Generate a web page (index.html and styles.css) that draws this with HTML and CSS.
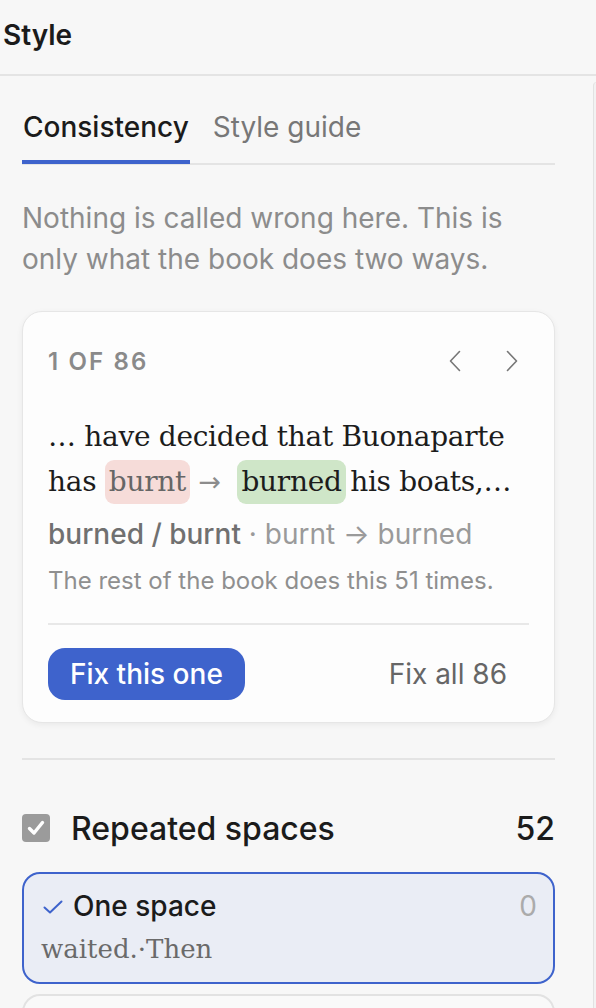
FILE: index.html
```html
<!DOCTYPE html>
<html lang="en">
<head>
<meta charset="utf-8">
<title>Style</title>
<link rel="stylesheet" href="styles.css">
</head>
<body>
<div class="panel">
  <header class="header">Style</header>
  <main class="content">
    <nav class="tabs">
      <div class="tab active">Consistency</div>
      <div class="tab">Style guide</div>
    </nav>
    <p class="intro">Nothing is called wrong here. This is only what the book does two ways.</p>

    <section class="card">
      <div class="card-nav">
        <span class="counter">1 OF 86</span>
        <div class="arrows">
          <button class="arrow" aria-label="Previous">
            <svg width="12" height="22" viewBox="0 0 12 22"><path d="M10.5 1.5 L1.5 11 L10.5 20.5" fill="none" stroke="#777" stroke-width="1.6" stroke-linecap="round" stroke-linejoin="round"/></svg>
          </button>
          <button class="arrow" aria-label="Next">
            <svg width="12" height="22" viewBox="0 0 12 22"><path d="M1.5 1.5 L10.5 11 L1.5 20.5" fill="none" stroke="#777" stroke-width="1.6" stroke-linecap="round" stroke-linejoin="round"/></svg>
          </button>
        </div>
      </div>
      <p class="excerpt">… have decided that Buonaparte has <span class="old">burnt</span> <span class="to">→</span> <span class="new">burned</span> his boats,…</p>
      <p class="meta"><span class="pair">burned / burnt</span> · burnt → burned</p>
      <p class="rest">The rest of the book does this 51 times.</p>
      <div class="card-divider"></div>
      <div class="actions">
        <button class="btn primary">Fix this one</button>
        <button class="btn ghost">Fix all 86</button>
      </div>
    </section>

    <div class="divider"></div>

    <div class="group-row">
      <span class="checkbox">
        <svg width="28" height="28" viewBox="0 0 28 28"><path d="M7.5 14.5 L12 19 L20.5 8.5" fill="none" stroke="#fff" stroke-width="3.4" stroke-linecap="round" stroke-linejoin="round"/></svg>
      </span>
      <span class="group-name">Repeated spaces</span>
      <span class="group-count">52</span>
    </div>

    <div class="option selected">
      <div class="option-head">
        <svg class="tick" width="20" height="14" viewBox="0 0 20 14"><path d="M1.5 7.5 L7 12.5 L18.5 1.5" fill="none" stroke="#3e63cc" stroke-width="2" stroke-linecap="round" stroke-linejoin="round"/></svg>
        <span class="option-name">One space</span>
        <span class="option-count">0</span>
      </div>
      <div class="option-sample">waited.·Then</div>
    </div>

    <div class="option next"></div>
  </main>
  <div class="scrollbar"></div>
</div>
</body>
</html>
```

FILE: styles.css
```css
* { box-sizing: border-box; }

html, body {
  margin: 0;
  padding: 0;
  background: #f7f7f7;
}

body {
  font-family: Inter, "Noto Sans", sans-serif;
  color: #1b1b1b;
  overflow: hidden;
}

.panel {
  position: relative;
  height: 1008px;
  overflow: hidden;
}

.header {
  height: 76px;
  display: flex;
  align-items: center;
  padding: 0 0 4px 3px;
  font-size: 28px;
  font-weight: 600;
  line-height: 1;
  color: #1b1b1b;
  border-bottom: 2px solid #e4e4e4;
}

.content {
  padding: 34px 41px 0 22px;
}

.tabs {
  display: flex;
  gap: 22px;
  border-bottom: 2px solid #e4e4e4;
}

.tab {
  font-size: 28px;
  line-height: 34px;
  padding: 0 1px 16px;
  margin-bottom: -1px;
  border-bottom: 4px solid transparent;
  color: #777;
}

.tab.active {
  color: #1b1b1b;
  font-weight: 500;
  border-bottom-color: #3e63cc;
}

.intro {
  margin: 33px 0 0;
  padding-right: 20px;
  font-size: 28px;
  line-height: 41px;
  color: #8c8c8c;
}

.card {
  margin-top: 31px;
  background: #fdfdfd;
  border: 1px solid #e6e6e6;
  border-radius: 20px;
  box-shadow: 0 2px 6px rgba(0, 0, 0, 0.06);
  padding: 23px 25px 22px 25px;
}

.card-nav {
  height: 52px;
  display: flex;
  align-items: center;
  justify-content: space-between;
}

.counter {
  font-size: 24px;
  font-weight: 600;
  letter-spacing: 0.09em;
  color: #8a8a8a;
}

.arrows {
  display: flex;
  gap: 23px;
}

.arrow {
  width: 34px;
  height: 40px;
  padding: 0;
  border: 0;
  background: none;
  display: flex;
  align-items: center;
  justify-content: center;
}

.excerpt {
  margin: 27px 0 0;
  font-family: "DejaVu Serif", "Liberation Serif", serif;
  font-size: 28px;
  letter-spacing: -0.3px;
  line-height: 45px;
  color: #1c1c1c;
}

.old, .new {
  display: inline-block;
  line-height: 44px;
  padding: 0 4px;
  border-radius: 9px;
}

.old {
  background: #f6dcd9;
  color: #666;
}

.new {
  background: #cfe6c8;
  color: #1c1c1c;
  margin-left: 8px;
  margin-right: -4px;
}

.to {
  color: #8c8c8c;
  font-family: "DejaVu Sans", sans-serif;
  font-size: 27px;
  line-height: 1;
}

.meta {
  margin: 12px 0 0;
  font-size: 28px;
  line-height: 36px;
  color: #9a9a9a;
}

.pair {
  font-weight: 500;
  color: #707070;
}

.rest {
  margin: 14px 0 0;
  font-size: 24px;
  line-height: 30px;
  color: #8f8f8f;
}

.card-divider {
  margin-top: 27px;
  height: 2px;
  background: #e8e8e8;
}

.actions {
  margin-top: 23px;
  display: flex;
  justify-content: space-between;
  align-items: center;
}

.btn {
  height: 52px;
  padding: 0 22px;
  border: 0;
  border-radius: 17px;
  font-family: Inter, "Noto Sans", sans-serif;
  font-size: 28px;
  background: none;
}

.btn.primary {
  background: #3e63cc;
  color: #fff;
  font-weight: 500;
}

.btn.ghost {
  color: #666;
}

.divider {
  margin-top: 35px;
  height: 2px;
  background: #e4e4e4;
}

.group-row {
  margin-top: 51px;
  height: 34px;
  display: flex;
  align-items: center;
}

.checkbox {
  width: 28px;
  height: 28px;
  border-radius: 4px;
  background: #9b9b9b;
  display: flex;
  margin-right: 21px;
}

.group-name {
  flex: 1;
  font-size: 32px;
  font-weight: 500;
  color: #1b1b1b;
}

.group-count {
  font-size: 32px;
  font-weight: 500;
  color: #1b1b1b;
}

.option {
  margin-top: 27px;
  border: 2px solid #e2e2e2;
  border-radius: 18px;
  background: #f9f9f9;
  padding: 15px 16px 15px 17px;
}

.option.selected {
  border-color: #3e63cc;
  background: #eaedf5;
}

.option.next {
  margin-top: 10px;
  height: 90px;
}

.option-head {
  display: flex;
  align-items: center;
  height: 34px;
}

.tick {
  margin: 2px 10px 0 2px;
}

.option-name {
  flex: 1;
  font-size: 28px;
  font-weight: 500;
  color: #1b1b1b;
}

.option-count {
  font-size: 28px;
  color: #ababab;
}

.option-sample {
  margin-top: 8px;
  font-family: "DejaVu Serif", "Liberation Serif", serif;
  font-size: 26px;
  line-height: 36px;
  color: #6a6a6a;
}

.scrollbar {
  position: absolute;
  left: 593px;
  top: 82px;
  width: 8px;
  height: 940px;
  border-radius: 4px;
  background: #f2f2f2;
  border-left: 1px solid #e2e2e2;
}
```
